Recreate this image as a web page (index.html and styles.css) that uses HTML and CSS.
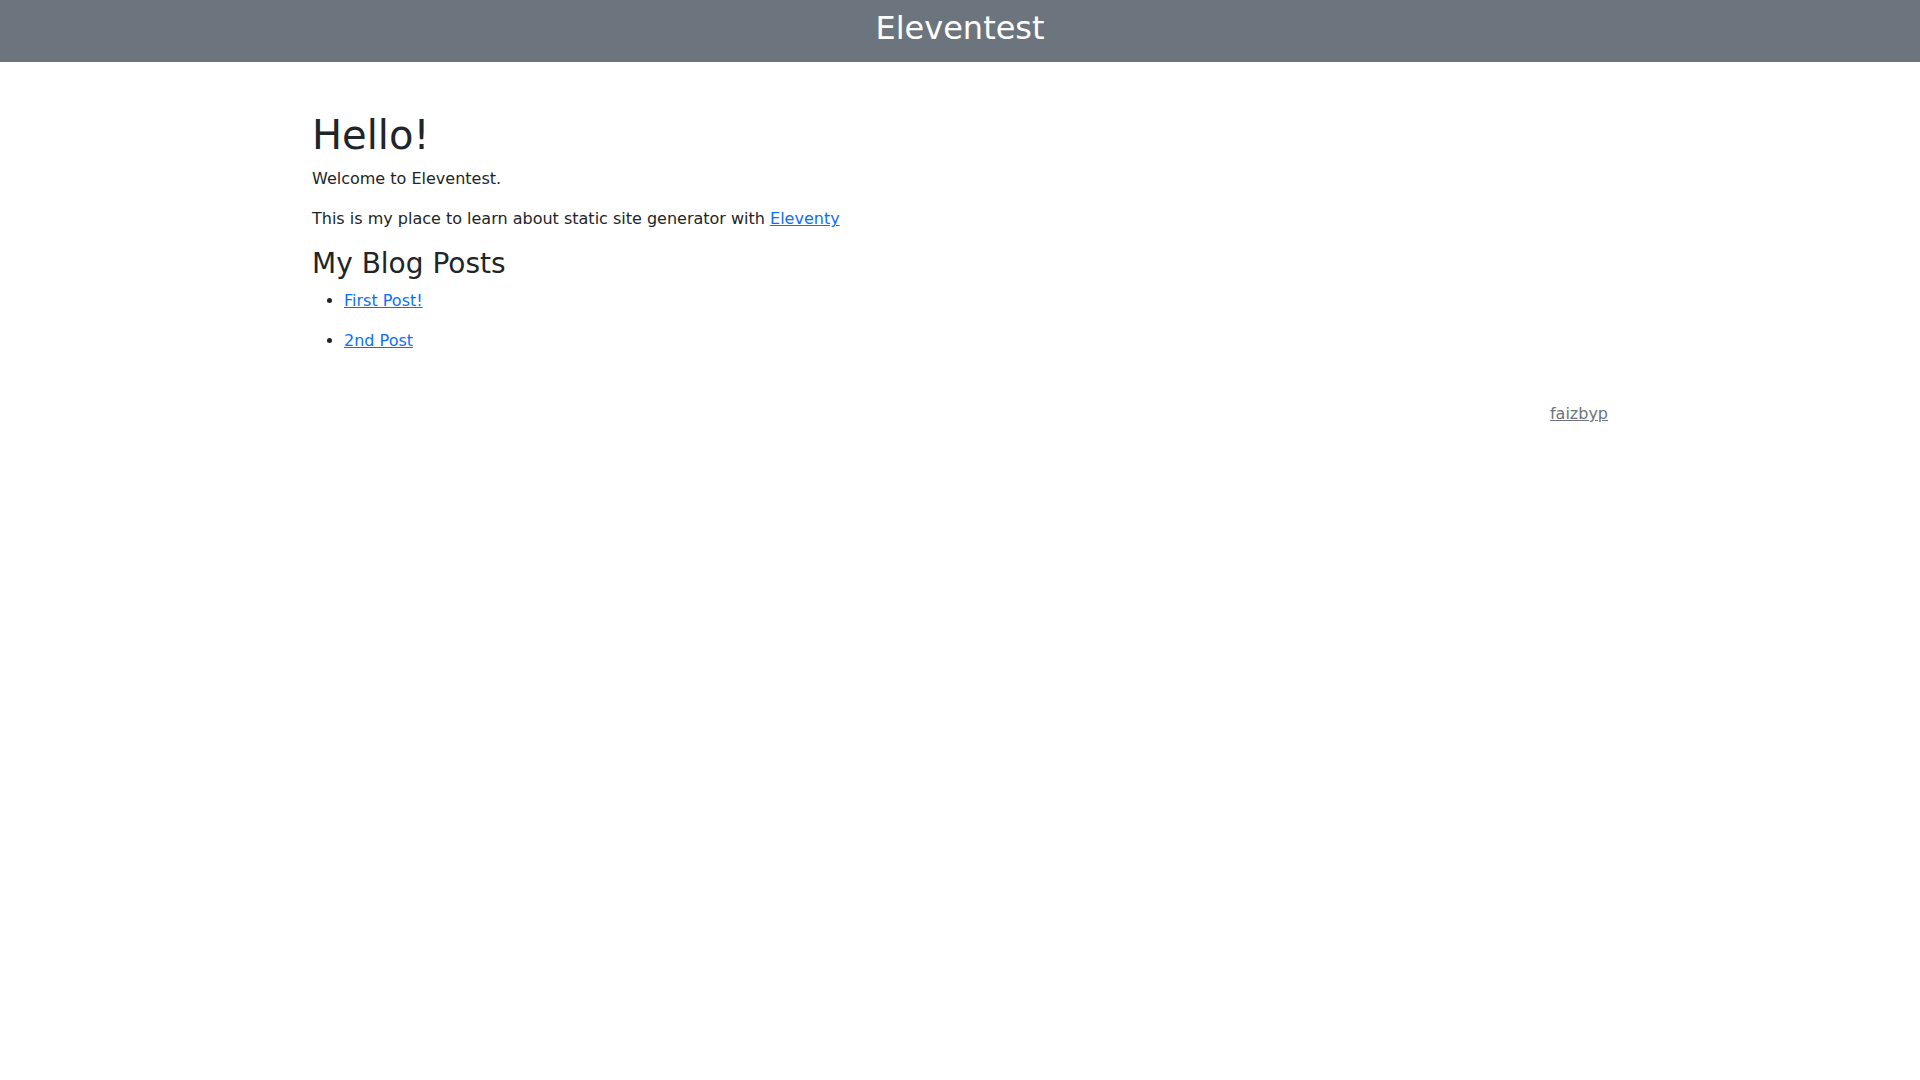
FILE: index.html
```html
<!DOCTYPE html>
<html lang="en">
  <head>
    <meta charset="utf-8">
    <title>Eleventest</title>
    <link rel="stylesheet" href="styles.css">
  </head>
  <body>
    <header class="site-header">
      <h1 class="site-title">Eleventest</h1>
    </header>

    <main class="container page">
      <h1>Hello!</h1>
      <p>Welcome to Eleventest.</p>
      <p>This is my place to learn about static site generator with <a href="#">Eleventy</a></p>

      <h3>My Blog Posts</h3>
      <ul class="post-list">
        <li><a href="#">First Post!</a></li>
        <li><a href="#">2nd Post</a></li>
      </ul>
    </main>

    <footer class="container site-footer">
      <a href="#">faizbyp</a>
    </footer>
  </body>
</html>
```

FILE: styles.css
```css
*,
*::before,
*::after {
  box-sizing: border-box;
}

body {
  margin: 0;
  font-family: "DejaVu Sans", sans-serif;
  font-size: 16px;
  line-height: 1.5;
  color: #212529;
  background: #fff;
}

h1,
h3 {
  margin: 0 0 8px;
  font-weight: 500;
  line-height: 1.2;
}

h1 {
  font-size: 40px;
}

h3 {
  font-size: 28px;
}

p {
  margin: 0 0 16px;
}

a {
  color: #0d6efd;
  text-decoration: underline;
}

.container {
  max-width: 1320px;
  margin-left: auto;
  margin-right: auto;
  padding: 0 12px;
}

/* Top bar */
.site-header {
  background-color: #6c757d;
  color: #fff;
  text-align: center;
  padding: 9px 8px 7px;
}

.site-title {
  font-size: 32px;
  margin-bottom: 8px;
}

.page {
  margin-top: 49px;
}

.post-list {
  margin: 0 0 16px;
  padding-left: 32px;
}

.post-list li {
  margin-bottom: 16px;
}

.site-footer {
  margin-top: 49px;
  text-align: right;
}

.site-footer a {
  color: #6c757d;
}
```
